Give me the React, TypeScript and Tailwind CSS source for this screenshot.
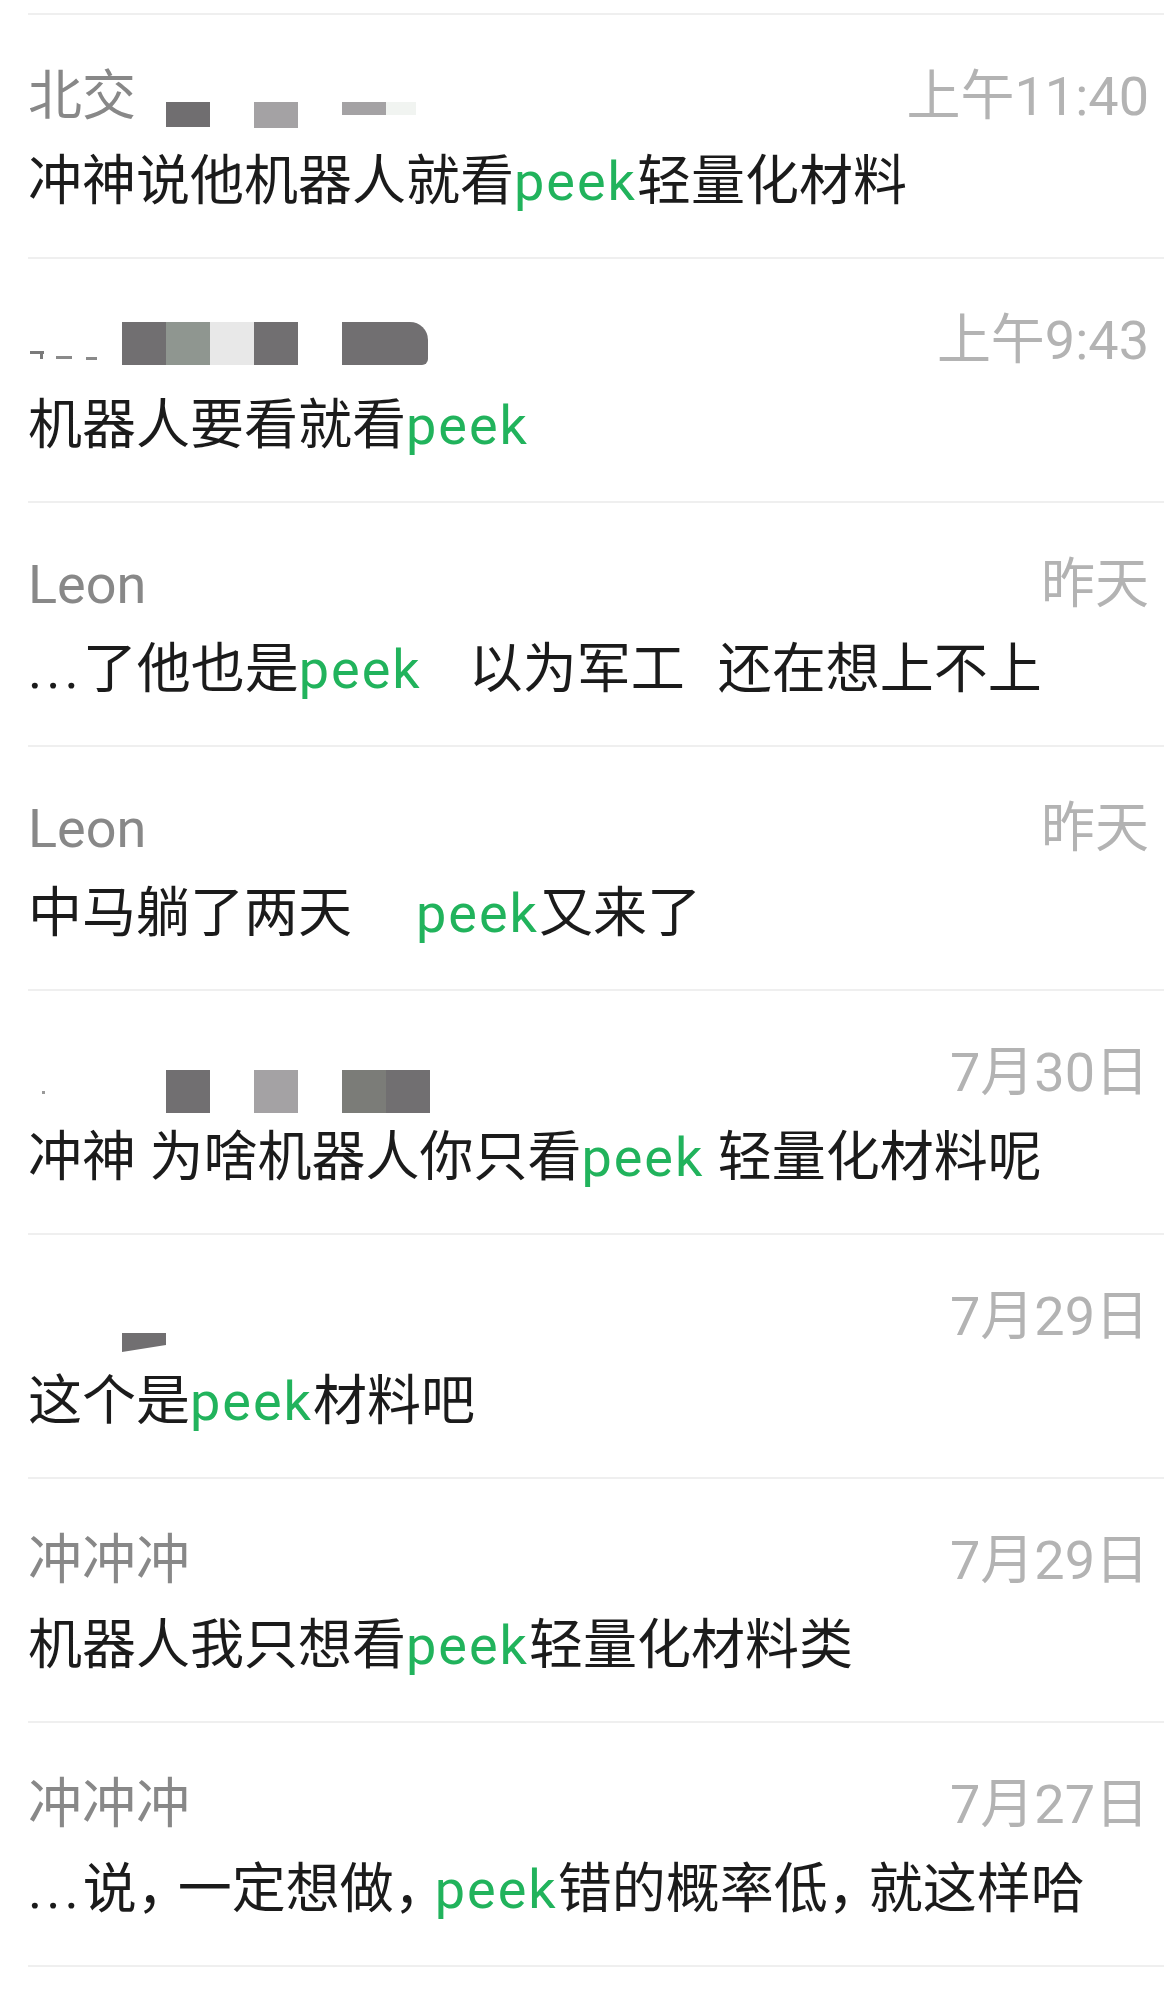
import React from "react";

type Block = { left: number; top: number; w: number; h: number; color: string; extra?: string };

function Mosaic({ blocks }: { blocks: Block[] }) {
  return (
    <>
      {blocks.map((b, i) => (
        <div
          key={i}
          className={`absolute ${b.extra ?? ""}`}
          style={{ left: b.left, top: b.top, width: b.w, height: b.h, backgroundColor: b.color }}
        />
      ))}
    </>
  );
}

function Row({
  name,
  time,
  overlay,
  children,
}: {
  name?: React.ReactNode;
  time: string;
  overlay?: React.ReactNode;
  children: React.ReactNode;
}) {
  return (
    <div className="ml-[28px] h-[244px] border-t-2 border-[#efefef] pr-[15px] pt-[50px]">
      <div className="relative flex h-[64px] items-start justify-between leading-[64px]">
        <span className="text-[#888888]">{name}</span>
        <span className="text-[#b3b3b3]">{time}</span>
        {overlay}
      </div>
      <div className="mt-[21px] h-[64px] whitespace-pre leading-[64px] text-[#1b1b1b]">{children}</div>
    </div>
  );
}

const G = ({ children }: { children: React.ReactNode }) => (
  <span className="tracking-[2px] text-[#21b35c]">{children}</span>
);
const Sp = ({ w }: { w: number }) => <span className="inline-block" style={{ width: w }} />;
const Dots = () => <span className="tracking-[4px]">...</span>;
const Comma = () => <span className="tracking-[-13px]">，</span>;

export default function App() {
  return (
    <div className="min-h-[1990px] bg-white pt-[13px] font-['Roboto','Noto_Sans_CJK_SC',sans-serif] text-[54px] antialiased">
      <Row
        name="北交"
        time="上午11:40"
        overlay={
          <Mosaic
            blocks={[
              { left: 138, top: 37, w: 44, h: 25, color: "#706e70" },
              { left: 226, top: 37, w: 44, h: 26, color: "#a4a2a4" },
              { left: 314, top: 37, w: 44, h: 13, color: "#a4a2a4" },
              { left: 358, top: 37, w: 30, h: 13, color: "#f1f4f1" },
            ]}
          />
        }
      >
        冲神说他机器人就看<G>peek</G>轻量化材料
      </Row>

      <Row
        time="上午9:43"
        overlay={
          <Mosaic
            blocks={[
              { left: 2, top: 42, w: 14, h: 3, color: "#7a7a7a" },
              { left: 12, top: 42, w: 3, h: 8, color: "#7a7a7a" },
              { left: 28, top: 47, w: 16, h: 3, color: "#8a8a8a" },
              { left: 58, top: 48, w: 11, h: 3, color: "#8a8a8a" },
              { left: 94, top: 13, w: 44, h: 43, color: "#716f71" },
              { left: 138, top: 13, w: 44, h: 43, color: "#8f9690" },
              { left: 182, top: 13, w: 44, h: 43, color: "#e8e8e8" },
              { left: 226, top: 13, w: 44, h: 43, color: "#716f71" },
              { left: 314, top: 13, w: 86, h: 43, color: "#716f71", extra: "rounded-tr-[18px] rounded-br-[6px]" },
            ]}
          />
        }
      >
        机器人要看就看<G>peek</G>
      </Row>

      <Row name="Leon" time="昨天">
        <Dots />了他也是<G>peek</G>
        <Sp w={47} />
        以为军工
        <Sp w={33} />
        还在想上不上
      </Row>

      <Row name="Leon" time="昨天">
        中马躺了两天
        <Sp w={64} />
        <G>peek</G>又来了
      </Row>

      <Row
        time="7月30日"
        overlay={
          <Mosaic
            blocks={[
              { left: 14, top: 50, w: 3, h: 3, color: "#9a9a9a" },
              { left: 138, top: 29, w: 44, h: 43, color: "#716f71" },
              { left: 226, top: 29, w: 44, h: 43, color: "#a4a2a4" },
              { left: 314, top: 29, w: 44, h: 43, color: "#7b7c78" },
              { left: 358, top: 29, w: 44, h: 43, color: "#716f71" },
            ]}
          />
        }
      >
        冲神 为啥机器人你只看<G>peek</G> 轻量化材料呢
      </Row>

      <Row
        time="7月29日"
        overlay={
          <svg className="absolute left-[94px] top-[48px]" width="44" height="19" viewBox="0 0 44 19">
            <polygon points="0,0 44,0 44,12 0,19" fill="#716f71" />
          </svg>
        }
      >
        这个是<G>peek</G>材料吧
      </Row>

      <Row name="冲冲冲" time="7月29日">
        机器人我只想看<G>peek</G>轻量化材料类
      </Row>

      <Row name="冲冲冲" time="7月27日">
        <Dots />说<Comma />一定想做<Comma />
        <G>peek</G>错的概率低<Comma />就这样哈
      </Row>

      <div className="ml-[28px] h-[2px] bg-[#efefef]" />
    </div>
  );
}
